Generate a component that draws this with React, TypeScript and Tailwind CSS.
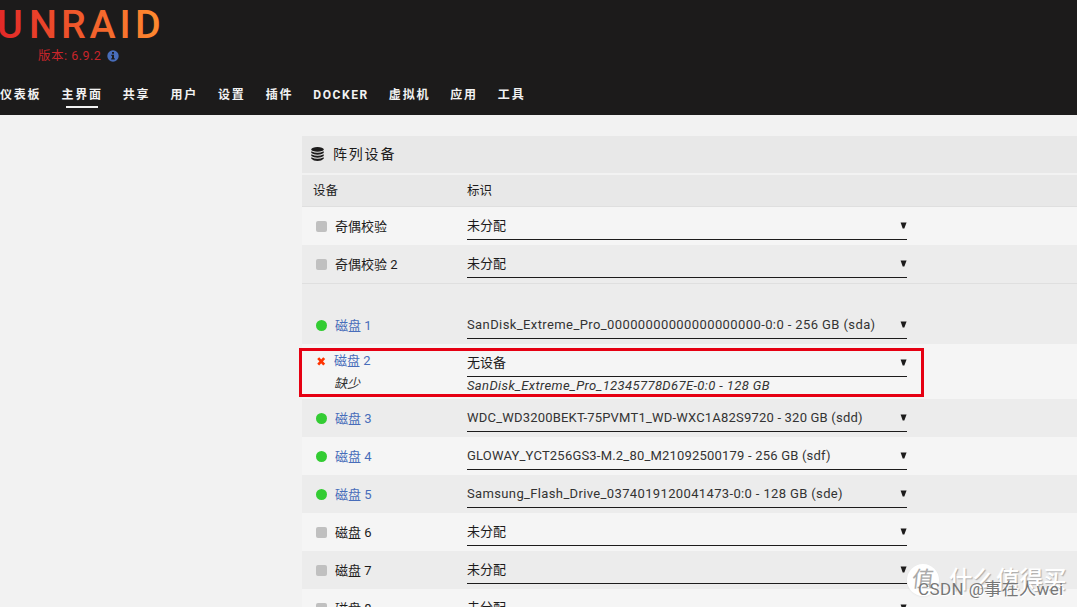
import React from "react";

type Status = "empty" | "ok" | "missing";

interface Slot {
  name: string;
  status: Status;
  value: string;
  tracking?: string;
  note?: string;
}

const parity: Slot[] = [
  { name: "奇偶校验", status: "empty", value: "未分配" },
  { name: "奇偶校验 2", status: "empty", value: "未分配" },
];

const disks: Slot[] = [
  { name: "磁盘 1", status: "ok", value: "SanDisk_Extreme_Pro_00000000000000000000-0:0 - 256 GB (sda)", tracking: "tracking-[0.4px]" },
  { name: "磁盘 2", status: "missing", value: "无设备", note: "SanDisk_Extreme_Pro_12345778D67E-0:0 - 128 GB" },
  { name: "磁盘 3", status: "ok", value: "WDC_WD3200BEKT-75PVMT1_WD-WXC1A82S9720 - 320 GB (sdd)", tracking: "tracking-[0.2px]" },
  { name: "磁盘 4", status: "ok", value: "GLOWAY_YCT256GS3-M.2_80_M21092500179 - 256 GB (sdf)", tracking: "tracking-[0.2px]" },
  { name: "磁盘 5", status: "ok", value: "Samsung_Flash_Drive_0374019120041473-0:0 - 128 GB (sde)", tracking: "tracking-[0.36px]" },
  { name: "磁盘 6", status: "empty", value: "未分配" },
  { name: "磁盘 7", status: "empty", value: "未分配" },
  { name: "磁盘 8", status: "empty", value: "未分配" },
];

const nav = ["仪表板", "主界面", "共享", "用户", "设置", "插件", "DOCKER", "虚拟机", "应用", "工具"];

function Logo() {
  return (
    <svg width="170" height="44" viewBox="0 0 170 44" className="block">
      <defs>
        <linearGradient id="brand" gradientUnits="userSpaceOnUse" x1="0" y1="38" x2="160" y2="10">
          <stop offset="0" stopColor="#e22828" />
          <stop offset="1" stopColor="#ff8c2f" />
        </linearGradient>
      </defs>
      <text
        x="-3 29 61 89.5 119.5 135"
        y="38"
        fontSize="39.4"
        fontWeight="500"
        fontFamily="Roboto, sans-serif"
        fill="url(#brand)"
      >
        UNRAID
      </text>
    </svg>
  );
}

function StatusMark({ status }: { status: Status }) {
  if (status === "ok") return <span className="size-[11px] shrink-0 rounded-full bg-[#33cc33]" />;
  if (status === "empty") return <span className="size-[11px] shrink-0 rounded-[2px] bg-[#c0c0c0]" />;
  return (
    <svg width="11" height="11" viewBox="0 0 11 11" className="shrink-0">
      <path d="M2.2 2.2 L8.2 8.6 M8.2 2.2 L2.2 8.6" stroke="#ff3300" strokeWidth="2.7" />
    </svg>
  );
}

function Select({ value, tracking }: { value: string; tracking?: string }) {
  return (
    <div className="flex h-[33px] w-[440px] items-center justify-between border-b border-[#1c1b1b] pt-1.5">
      <span className={`whitespace-nowrap ${tracking ? `${tracking} text-[#333333]` : "-mt-px"}`}>{value}</span>
      <svg width="7" height="7" viewBox="0 0 7 7" className="-mt-px shrink-0">
        <path d="M0.6 0.5H6.6L4.3 6.5H2.7Z" fill="#1c1b1b" />
      </svg>
    </div>
  );
}

function Row({ slot, shaded }: { slot: Slot; shaded: boolean }) {
  const missing = slot.status === "missing";
  const link = slot.status !== "empty";
  return (
    <div className={`flex shrink-0 ${missing ? "h-[55px]" : "h-[38px]"} ${shaded ? "bg-[#ececec]" : "bg-[#f5f5f5]"}`}>
      <div className="w-[165px] shrink-0 pl-3.5">
        <div className={`flex items-center ${missing ? "h-[34px] gap-[7px]" : "h-[39px] gap-2"}`}>
          <StatusMark status={slot.status} />
          <span className={link ? "text-[#486dba]" : ""}>{slot.name}</span>
        </div>
        {missing && <div className="-mt-[3px] pl-[18px] text-[13px] leading-[18px] text-[#333333] italic">缺少</div>}
      </div>
      <div>
        <Select value={slot.value} tracking={slot.tracking} />
        {slot.note && <div className="whitespace-nowrap leading-[18px] text-[#333333] italic tracking-[0.38px]">{slot.note}</div>}
      </div>
    </div>
  );
}

export default function App() {
  return (
    <div className="relative flex h-[607px] w-[1077px] flex-col overflow-hidden bg-[#f2f2f2] font-[Roboto,'Noto_Sans_CJK_SC',sans-serif] text-[13px] leading-[18px] text-[#1c1b1b]">
      <header className="h-[115px] shrink-0 bg-[#1c1b1b]">
        <Logo />
        <div className="flex h-6 items-center gap-1.5 pl-[38px] text-[12.5px] tracking-[0.5px] text-[#c9252b]">
          <span>版本: 6.9.2</span>
          <svg width="12" height="12" viewBox="0 0 12 12">
            <circle cx="6" cy="6" r="5.7" fill="#486dba" />
            <path d="M5 2.1h2v1.6H5zM4.3 4.8H7v3.4h.8v1.3H4.2V8.2H5V6h-.7z" fill="#1c1b1b" />
          </svg>
        </div>
        <nav className="flex gap-5 pt-[18px] text-[12px] leading-[18px] font-bold tracking-[1.8px] text-[#f2f2f2]">
          {nav.map((label) => (
            <div key={label} className={`flex flex-col items-center ${label === "DOCKER" ? "tracking-[1.6px]" : ""}`}>
              <span className="whitespace-nowrap">{label}</span>
              {label === "主界面" && <span className="mt-0.5 h-0.5 w-8 bg-[#f2f2f2]" />}
            </div>
          ))}
        </nav>
      </header>

      <main className="ml-[302px] flex min-h-0 flex-1 flex-col overflow-hidden pt-[21px]">
        <h1 className="flex h-[37px] shrink-0 items-center gap-[9px] bg-[#e8e8e8] pb-0.5 pl-[9px] text-[14px] tracking-[1.8px]">
          <svg width="13" height="14" viewBox="0 0 13 14" fill="#1c1b1b">
            <ellipse cx="6.5" cy="2.4" rx="6.2" ry="2.4" />
            <path d="M.3 4.2Q6.5 7.5 12.7 4.2V6Q10.5 7.8 6.5 7.8T.3 6zM.3 7.2Q6.5 10.5 12.7 7.2V9Q10.5 10.8 6.5 10.8T.3 9zM.3 10.2Q6.5 13.5 12.7 10.2V11.8Q10.5 14 6.5 14T.3 11.8z" />
          </svg>
          阵列设备
        </h1>
        <div className="mt-0.5 flex h-8 shrink-0 items-center border-b border-[#dfdfdf] bg-[#e8e8e8] text-[12.5px]">
          <span className="w-[165px] pl-[11px]">设备</span>
          <span>标识</span>
        </div>
        {parity.map((slot, i) => (
          <Row key={slot.name} slot={slot} shaded={i % 2 === 1} />
        ))}
        <div className="h-[23px] shrink-0 border-t border-[#dfdfdf] bg-[#ececec]" />
        {disks.map((slot, i) => (
          <Row key={slot.name} slot={slot} shaded={i % 2 === 0} />
        ))}
      </main>

      <div className="absolute top-[348px] left-[299px] h-[49px] w-[625px] border-[3px] border-[#e60012]" />

      <div className="absolute top-[564px] left-[907px] flex items-center gap-2.5">
        <span className="flex size-8 items-center justify-center rounded-full bg-white text-[22px] text-[#aaaaaa] shadow-xs"><span className="-skew-x-6">值</span></span>
        <span className="text-[23.5px] leading-8 font-medium whitespace-nowrap text-white [text-shadow:1px_1px_1px_#aaaaaa]">什么值得买</span>
      </div>
      <div className="absolute top-[579px] left-[918px] text-[17px] leading-5 tracking-[0.4px] whitespace-nowrap text-[#777777] [text-shadow:1px_1px_0_#ffffff]">
        CSDN @事在人wei
      </div>
    </div>
  );
}
